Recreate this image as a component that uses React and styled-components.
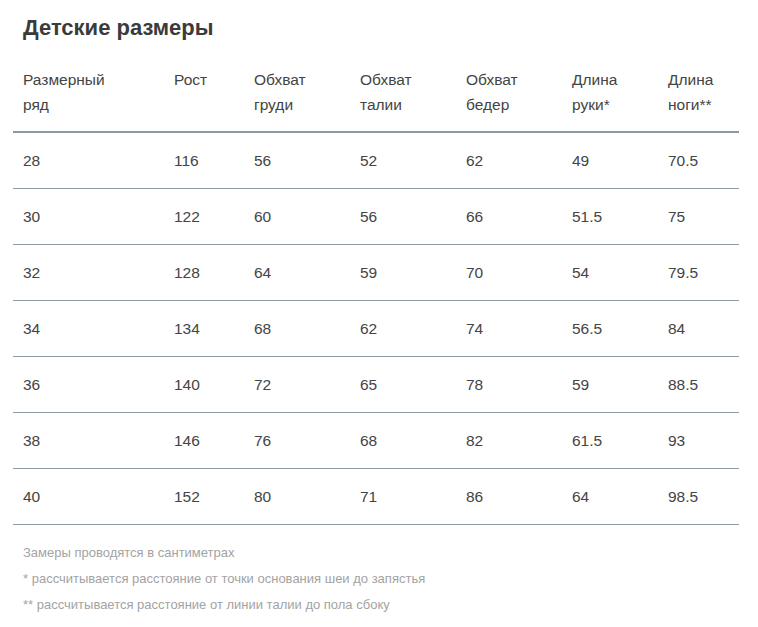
import React from 'react';
import styled, { createGlobalStyle } from 'styled-components';

const GlobalStyle = createGlobalStyle`
  html, body {
    margin: 0;
    padding: 0;
    background: #fff;
  }
  body {
    font-family: 'Liberation Sans', Arial, Helvetica, sans-serif;
  }
`;

const Container = styled.div`
  padding: 15px 19px 0 13px;
  color: #444;
`;

const Title = styled.h2`
  margin: 0 0 26px 10px;
  font-size: 22px;
  line-height: 26px;
  font-weight: 700;
  color: #3b3b3b;
`;

const Table = styled.table`
  width: 726px;
  border-collapse: collapse;
  table-layout: fixed;
`;

const HeadCell = styled.th`
  width: ${p => p.$w - 20}px;
  padding: 0 10px 14px;
  text-align: left;
  vertical-align: top;
  font-size: 15.5px;
  font-weight: 400;
  line-height: 25px;
  color: #444;
  border-bottom: 2px solid #8e99a6;
`;

const Cell = styled.td`
  height: 55px;
  padding: 0 10px;
  font-size: 15.5px;
  line-height: 25px;
  color: #444;
  border-bottom: 1px solid #8e99a6;
  vertical-align: middle;
`;

const Notes = styled.div`
  margin: 15px 0 0 10px;
  font-size: 13px;
  line-height: 26px;
  color: #a3a3a3;
`;

const columns = [
  { w: 151, label: ['Размерный', 'ряд'] },
  { w: 80, label: ['Рост'] },
  { w: 106, label: ['Обхват', 'груди'] },
  { w: 106, label: ['Обхват', 'талии'] },
  { w: 106, label: ['Обхват', 'бедер'] },
  { w: 96, label: ['Длина', 'руки*'] },
  { w: 81, label: ['Длина', 'ноги**'] },
];

const rows = [
  ['28', '116', '56', '52', '62', '49', '70.5'],
  ['30', '122', '60', '56', '66', '51.5', '75'],
  ['32', '128', '64', '59', '70', '54', '79.5'],
  ['34', '134', '68', '62', '74', '56.5', '84'],
  ['36', '140', '72', '65', '78', '59', '88.5'],
  ['38', '146', '76', '68', '82', '61.5', '93'],
  ['40', '152', '80', '71', '86', '64', '98.5'],
];

export default function App() {
  return (
    <Container>
      <GlobalStyle />
      <Title>Детские размеры</Title>
      <Table>
        <thead>
          <tr>
            {columns.map((c, i) => (
              <HeadCell key={i} $w={c.w}>
                {c.label.map((l, j) => (
                  <React.Fragment key={j}>
                    {j > 0 && <br />}
                    {l}
                  </React.Fragment>
                ))}
              </HeadCell>
            ))}
          </tr>
        </thead>
        <tbody>
          {rows.map((r, i) => (
            <tr key={i}>
              {r.map((v, j) => <Cell key={j}>{v}</Cell>)}
            </tr>
          ))}
        </tbody>
      </Table>
      <Notes>
        <div>Замеры проводятся в сантиметрах</div>
        <div>* рассчитывается расстояние от точки основания шеи до запястья</div>
        <div>** рассчитывается расстояние от линии талии до пола сбоку</div>
      </Notes>
    </Container>
  );
}
